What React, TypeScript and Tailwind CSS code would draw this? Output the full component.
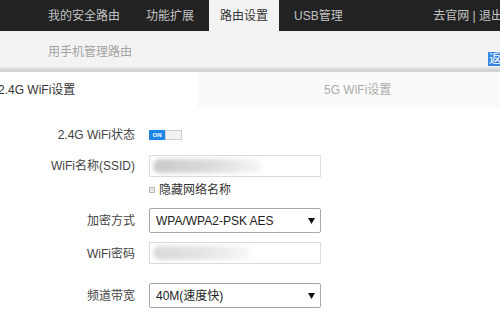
import React from 'react'

const font = { fontFamily: '"Liberation Sans", "Noto Sans CJK SC", sans-serif' }

const navItems = ['我的安全路由', '功能扩展', '路由设置', 'USB管理']

function Arrow() {
  return (
    <svg width="7" height="6" viewBox="0 0 7 6" className="shrink-0">
      <path d="M0 0 H7 L3.5 6 Z" fill="#111" />
    </svg>
  )
}

function Label({ children }: { children: React.ReactNode }) {
  return <div className="w-[135px] shrink-0 text-right text-[12px] text-[#444]">{children}</div>
}

function BlurInput({ blobWidth, blobColor }: { blobWidth: string; blobColor: string }) {
  return (
    <div className="relative h-[22px] w-[172px] overflow-hidden border border-[#dcdcdc] bg-white">
      <div className={`absolute left-[3px] top-[3px] h-[14px] ${blobWidth} rounded-full blur-[2px] ${blobColor}`} />
    </div>
  )
}

function Select({ value }: { value: string }) {
  return (
    <div className="flex h-[25px] w-[172px] items-center justify-between rounded-[2px] border border-[#a8a8a8] bg-white pl-[6px] pr-[5px] text-[12px] text-[#222]">
      <span>{value}</span>
      <Arrow />
    </div>
  )
}

export default function App() {
  return (
    <div className="h-[312px] w-[500px] overflow-hidden bg-white" style={font}>
      {/* Top navigation */}
      <div className="flex h-[31px] items-stretch gap-[4px] overflow-hidden bg-[#222222] pl-[37px] text-[12px]">
        {navItems.map((item) => (
          <div
            key={item}
            className={
              item === '路由设置'
                ? 'flex items-center bg-[#f3f3f4] px-[11px] text-[#333]'
                : 'flex items-center px-[11px] text-[#c4c4c4]'
            }
          >
            {item}
          </div>
        ))}
        <div className="ml-auto mr-[-3px] flex shrink-0 items-center whitespace-nowrap text-[#c4c4c4]">
          去官网 | 退出
        </div>
      </div>

      {/* Sub bar */}
      <div className="flex h-[36px] items-start overflow-hidden bg-[#f3f3f4] pl-[48px] text-[12px]">
        <span className="mt-[12px] text-[#a3a3a3]">用手机管理路由</span>
        <span className="ml-auto mr-[-14px] mt-[21px] shrink-0 bg-[#3a86e6] px-[1px] leading-[14px] text-white">
          返回
        </span>
      </div>
      <div className="h-[2px] bg-[#e4e4e4]" />
      <div className="h-[3px] bg-[#d3d3d3]" />

      {/* Band tabs */}
      <div className="flex h-[36px] text-[12px]">
        <div className="flex w-[197px] items-center bg-white text-[#333]">
          <span className="ml-[-2px]">2.4G WiFi设置</span>
        </div>
        <div className="flex flex-1 items-center bg-[#fafafa] pl-[127px] text-[#acacac]">5G WiFi设置</div>
      </div>

      {/* Form */}
      <div className="flex flex-col">
        <div className="mt-[16px] flex h-[22px] items-center gap-[14px]">
          <Label>2.4G WiFi状态</Label>
          <div className="flex h-[10px] w-[33px]">
            <div className="flex w-[16px] items-center justify-center bg-[#1b86e8] text-[6px] font-bold leading-none text-white">
              ON
            </div>
            <div className="flex-1 border border-[#cfcfcf] bg-[#f2f2f2]" />
          </div>
        </div>

        <div className="mt-[9px] flex h-[22px] items-center gap-[14px]">
          <Label>WiFi名称(SSID)</Label>
          <BlurInput blobWidth="w-[108px]" blobColor="bg-gradient-to-r from-[#c9c9c9] via-[#dadada] to-[#f6f6f6]" />
        </div>

        <div className="mt-[6px] flex h-[14px] items-center gap-[14px]">
          <div className="w-[135px] shrink-0" />
          <div className="flex items-center gap-[4px] text-[12px] text-[#333]">
            <div className="h-[6px] w-[6px] border border-[#b8b8b8] bg-[#e6e6e6]" />
            <span>隐藏网络名称</span>
          </div>
        </div>

        <div className="mt-[11px] flex h-[25px] items-center gap-[14px]">
          <Label>加密方式</Label>
          <Select value="WPA/WPA2-PSK AES" />
        </div>

        <div className="mt-[9px] flex h-[22px] items-center gap-[14px]">
          <Label>
            <span className="relative top-[1px]">WiFi密码</span>
          </Label>
          <BlurInput blobWidth="w-[98px]" blobColor="bg-gradient-to-r from-[#d9d9d9] via-[#e4e4e4] to-[#f8f8f8]" />
        </div>

        <div className="mt-[19px] flex h-[25px] items-center gap-[14px]">
          <Label>频道带宽</Label>
          <Select value="40M(速度快)" />
        </div>
      </div>
    </div>
  )
}
